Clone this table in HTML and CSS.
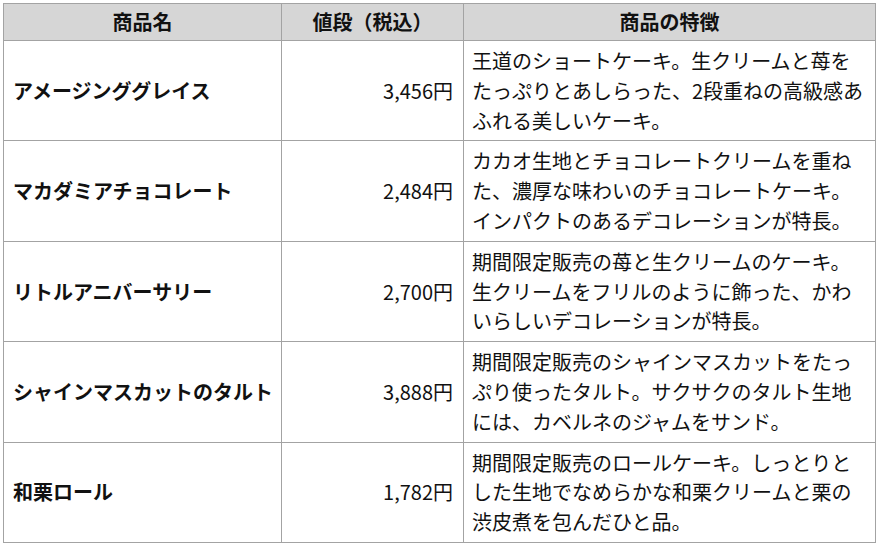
FILE: index.html
```html
<!DOCTYPE html>
<html lang="ja">
<head>
<meta charset="utf-8">
<title>商品一覧</title>
<link rel="stylesheet" href="styles.css">
</head>
<body>
<table class="menu">
  <colgroup>
    <col class="c-name">
    <col class="c-price">
    <col class="c-desc">
  </colgroup>
  <thead>
    <tr>
      <th>商品名</th>
      <th>値段（税込）</th>
      <th>商品の特徴</th>
    </tr>
  </thead>
  <tbody>
    <tr>
      <td class="name">アメージンググレイス</td>
      <td class="price">3,456円</td>
      <td class="desc">王道のショートケーキ。生クリームと苺をたっぷりとあしらった、2段重ねの高級感あふれる美しいケーキ。</td>
    </tr>
    <tr>
      <td class="name">マカダミアチョコレート</td>
      <td class="price">2,484円</td>
      <td class="desc">カカオ生地とチョコレートクリームを重ねた、濃厚な味わいのチョコレートケーキ。インパクトのあるデコレーションが特長。</td>
    </tr>
    <tr>
      <td class="name">リトルアニバーサリー</td>
      <td class="price">2,700円</td>
      <td class="desc">期間限定販売の苺と生クリームのケーキ。生クリームをフリルのように飾った、かわいらしいデコレーションが特長。</td>
    </tr>
    <tr>
      <td class="name">シャインマスカットのタルト</td>
      <td class="price">3,888円</td>
      <td class="desc">期間限定販売のシャインマスカットをたっぷり使ったタルト。サクサクのタルト生地には、カベルネのジャムをサンド。</td>
    </tr>
    <tr>
      <td class="name">和栗ロール</td>
      <td class="price">1,782円</td>
      <td class="desc">期間限定販売のロールケーキ。しっとりとした生地でなめらかな和栗クリームと栗の渋皮煮を包んだひと品。</td>
    </tr>
  </tbody>
</table>
</body>
</html>
```
FILE: styles.css
```css
html, body {
  background: #ffffff;
}
body {
  margin: 3px;
  font-family: "Noto Sans CJK JP", "Noto Sans", sans-serif;
  color: #111111;
}
.menu {
  border-collapse: collapse;
  table-layout: fixed;
  width: 872px;
  font-size: 20px;
  line-height: 29.8px;
}
.c-name { width: 278px; }
.c-price { width: 182px; }
.c-desc { width: 412px; }
.menu th,
.menu td {
  border: 1px solid #a3a3a3;
}
.menu th {
  background: #d6d6d6;
  font-weight: 700;
  text-align: center;
  padding: 3px 9px;
  height: 30px;
  line-height: 30px;
}
.menu td {
  padding: 5px 9px;
  vertical-align: middle;
}
.menu td.name {
  font-weight: 700;
  white-space: nowrap;
  padding-left: 9px;
  padding-right: 4px;
}
.menu td.price {
  text-align: right;
  padding-right: 10px;
}
.menu td.desc {
  vertical-align: top;
  padding-left: 8px;
  padding-right: 8px;
}
```
